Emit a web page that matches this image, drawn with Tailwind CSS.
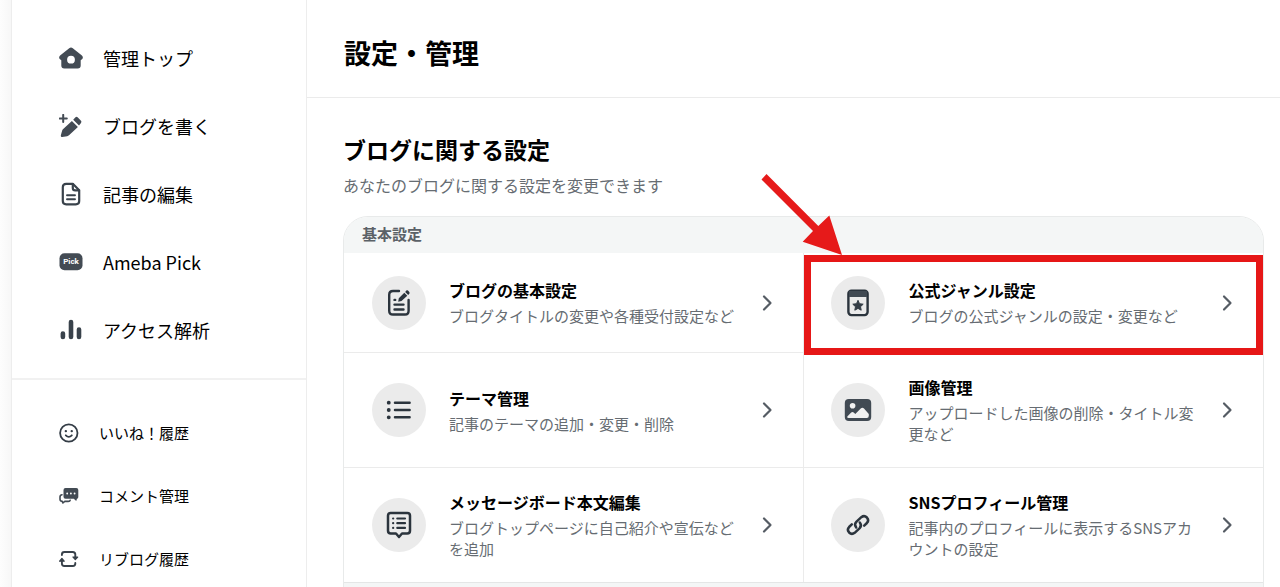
<!DOCTYPE html>
<html lang="ja">
<head>
<meta charset="utf-8">
<meta name="viewport" content="width=device-width, initial-scale=1">
<title>設定・管理</title>
<script src="https://cdn.jsdelivr.net/npm/@tailwindcss/browser@4"></script>
</head>
<body class="h-screen overflow-hidden bg-white font-['Noto_Sans_CJK_JP',sans-serif] text-black">
<div class="flex min-h-full">
  <div class="w-[11px] shrink-0 bg-linear-to-r from-[#fdfdfd] to-[#f7f7f7]"></div>
  <aside class="w-[296px] shrink-0 border-x border-[#ededed]">
    <nav aria-label="メインメニュー" class="pt-6">
      <ul class="border-b-2 border-[#f1f1f1] pb-[14px] text-[18px] leading-7">
        <li><a href="#" class="flex h-17 items-center gap-5 pl-[47px]">
          <svg class="size-6 shrink-0" viewBox="0 0 24 24" fill="#434b54"><path fill-rule="evenodd" d="M10.200 2.200Q12 .8 13.800 2.200L22.900 9.600Q24.600 11.400 23.300 13L21.700 14.300V19.500Q21.700 22.500 18.700 22.500H5.300Q2.300 22.500 2.300 19.500V14.300L.7 13Q-.6 11.400 1.100 9.600ZM12 9.800a3.900 3.900 0 1 0 0 7.800 3.900 3.900 0 0 0 0-7.800Z"/></svg>
          <span>管理トップ</span></a></li>
        <li><a href="#" class="flex h-17 items-center gap-5 pl-[47px]">
          <svg class="size-6 shrink-0" viewBox="0 0 24 24"><path d="M4.200 .9V8.100M.7 4.500H7.800" stroke="#434b54" stroke-width="2" stroke-linecap="round"/><path fill="#434b54" d="M12.900 7 18.900 13 10 21.300Q9.200 22 8.200 22.200L3.200 23Q1.600 23.100 1.800 21.500L3.100 16.800Q3.400 15.900 4.200 15.100ZM14.200 5.800 16.500 3.200Q17.500 2.200 18.600 3.200L22 6.800Q22.900 7.900 22 8.900L20 11.600Z"/></svg>
          <span>ブログを書く</span></a></li>
        <li><a href="#" class="flex h-17 items-center gap-5 pl-[47px]">
          <svg class="size-6 shrink-0" viewBox="0 0 24 24" fill="none" stroke="#39424b" stroke-width="2.200" stroke-linecap="round" stroke-linejoin="round"><path d="M13.800 1.800H7.200Q3.800 1.800 3.800 5.200V19Q3.800 22.300 7.200 22.300H16.800Q20.200 22.300 20.200 19V8.200Z"/><path d="M13.800 2V6Q13.800 8.400 16.200 8.400H20"/><path d="M8 13.300H16M8 17.300H16" stroke-width="1.900"/></svg>
          <span>記事の編集</span></a></li>
        <li><a href="#" class="flex h-17 items-center gap-5 pl-[47px]">
          <svg class="size-6 shrink-0" viewBox="0 0 24 24"><rect x=".5" y="3.200" width="23" height="17" rx="5" fill="#434b54"/><text x="12" y="14.300" text-anchor="middle" font-family="Roboto" font-size="8" font-weight="700" fill="#fff">Pick</text></svg>
          <span>Ameba Pick</span></a></li>
        <li><a href="#" class="flex h-17 items-center gap-5 pl-[47px]">
          <svg class="size-6 shrink-0" viewBox="0 0 24 24" stroke="#39424b" stroke-width="4.600" stroke-linecap="round"><path d="M3.900 15.500V19M12 4V19M20 11.500V19"/></svg>
          <span>アクセス解析</span></a></li>
      </ul>
      <ul class="pt-[22px] text-[15px] leading-6">
        <li><a href="#" class="flex h-[62px] items-center gap-5 pl-[47px]">
          <svg class="size-5 shrink-0" viewBox="0 0 20 20" fill="none" stroke="#343d46" stroke-width="1.800" stroke-linecap="round"><circle cx="9.800" cy="10" r="8.700"/><path d="M6.800 12.300Q9.800 15.300 12.800 12.300"/><path d="M6.800 8.200H6.900M12.700 8.200H12.800" stroke-width="2.300"/></svg>
          <span>いいね！履歴</span></a></li>
        <li><a href="#" class="flex h-[63px] items-center gap-5 pl-[47px]">
          <svg class="size-5 shrink-0" viewBox="0 0 20 20"><path fill="#434b54" d="M6.500 2H17.300Q19.300 2 19.300 4V11Q19.300 12.600 18 12.800L17.200 15 14.800 12.800H6.500Q4.500 12.800 4.500 10.800V4Q4.500 2 6.500 2Z"/><path d="M8.200 7.500H16" stroke="#fff" stroke-width="1.900" stroke-linecap="round" stroke-dasharray="0 3.700"/><path d="M3 8.800Q1 9 1 11V13.300Q1 15.300 3.300 15.400L3.900 17 5.800 15.400H9.200Q11 15.400 11.200 14.200" fill="none" stroke="#434b54" stroke-width="1.600" stroke-linecap="round" stroke-linejoin="round"/></svg>
          <span>コメント管理</span></a></li>
        <li><a href="#" class="flex h-[63px] items-center gap-5 pl-[47px]">
          <svg class="size-5 shrink-0" viewBox="0 0 20 20" fill="none" stroke="#39424b" stroke-width="1.900" stroke-linecap="round" stroke-linejoin="round"><path d="M2.900 6V5.500Q2.900 3 5.400 3H13.700Q16.300 3 16.300 5.600V9M16.300 14V14.500Q16.300 17 13.800 17H5.400Q2.900 17 2.900 14.500V10.800"/><path fill="#39424b" stroke-width="1.200" d="M14 8H18.700L16.300 10.600ZM.6 12.200H5.200L2.900 9.500Z"/></svg>
          <span>リブログ履歴</span></a></li>
      </ul>
    </nav>
  </aside>

  <main class="min-w-0 flex-1">
    <header class="border-b border-[#ebebeb] px-9 pt-8 pb-6">
      <h1 class="pl-px text-[27px] leading-[41px] font-bold">設定・管理</h1>
    </header>
    <div class="pt-[33px] pr-4 pl-9">
      <h2 class="text-[23px] leading-9 font-bold">ブログに関する設定</h2>
      <p class="mt-1 text-[16px] leading-7 text-[#666c72]">あなたのブログに関する設定を変更できます</p>

      <section class="mt-[17px] rounded-t-[25px] border border-[#e8eaea]">
        <h3 class="rounded-t-[24px] bg-[#f4f6f6] pt-[5px] pb-[7px] pl-[18px] text-[15px] leading-6 font-bold text-[#5b6167]">基本設定</h3>
        <div class="grid grid-cols-2">
          <a href="#" class="flex items-center border-r border-b border-[#ebebeb] py-[22px] pr-6 pl-7">
            <span class="mr-[23px] flex h-[55px] shrink-0 items-center"><span class="flex size-[54px] items-center justify-center rounded-full bg-[#ebebeb]">
              <svg class="size-7" viewBox="0 0 28 28" fill="none" stroke="#2b343d" stroke-width="2.400" stroke-linecap="round"><path d="M14 2H8Q4.200 2 4.200 5.800V21.700Q4.200 25.500 8 25.500H20Q23.600 25.500 23.600 21.700V11"/><path d="M9.500 15.600H18.500M9.500 20.500H18.500"/><path d="M9.500 10.900H10.200"/><path stroke="none" fill="#2b343d" d="M19.300 3.800 22.300 6.800 16.500 12.100 13.200 12.800 13.800 9.300ZM20.200 2.900 21.300 1.600Q22.200 .9 23 1.600L24.300 2.900Q25 3.800 24.300 4.700L23.200 5.900Z"/></svg>
            </span></span>
            <span class="flex-1"><strong class="block text-[16px] leading-[22px]">ブログの基本設定</strong><span class="mt-1 block text-[15px] leading-[21px] text-[#666c72]">ブログタイトルの変更や各種受付設定など</span></span>
            <svg class="ml-3 size-6 shrink-0" viewBox="0 0 24 24" fill="none" stroke="#555c64" stroke-width="2.200" stroke-linecap="round" stroke-linejoin="round"><path d="M9 5.500 15.500 12 9 18.500"/></svg>
          </a>
          <a href="#" class="relative flex items-center border-b border-[#ebebeb] py-[22px] pr-6 pl-[27px]">
            <span class="mr-6 flex h-[55px] shrink-0 items-center"><span class="flex size-[54px] items-center justify-center rounded-full bg-[#ebebeb]">
              <svg class="size-7" viewBox="0 0 28 28"><rect x="4.400" y="1.700" width="19.200" height="24.400" rx="3" fill="#ebebeb" stroke="#2b343d" stroke-width="2.400"/><path fill="#414a53" d="M5 2H23V8H5Z"/><path fill="#343d46" stroke="#343d46" stroke-linejoin="round" d="M14 11.300 15.500 14.700 19.200 15.200 16.500 17.700 17.200 21.200 14 19.400 10.800 21.200 11.500 17.700 8.800 15.200 12.500 14.700Z"/></svg>
            </span></span>
            <span class="flex-1"><strong class="block text-[16px] leading-[22px]">公式ジャンル設定</strong><span class="mt-1 block text-[15px] leading-[21px] text-[#666c72]">ブログの公式ジャンルの設定・変更など</span></span>
            <svg class="ml-3 size-6 shrink-0" viewBox="0 0 24 24" fill="none" stroke="#555c64" stroke-width="2.200" stroke-linecap="round" stroke-linejoin="round"><path d="M9 5.500 15.500 12 9 18.500"/></svg>
            <span class="absolute inset-x-0 top-0.5 -bottom-[3px] border-[7px] border-[#e61717]"></span>
            <svg class="absolute -top-[81px] -left-11 size-[84px]" viewBox="0 0 84 84" fill="#e61a1a"><path d="M6.500 2 58.300 54 69.300 43.500 82 83 42.700 69.700 53 59 1.500 7.500Z"/></svg>
          </a>
          <a href="#" class="flex items-center border-r border-b border-[#ebebeb] py-[23px] pr-6 pl-7">
            <span class="mr-[23px] flex size-[54px] shrink-0 items-center justify-center rounded-full bg-[#ebebeb]">
              <svg class="size-7" viewBox="0 0 28 28" fill="none" stroke="#2b343d" stroke-width="2.500" stroke-linecap="round"><path d="M10 6.700H24.600M10 14H24.600M10 21.300H24.600"/><path stroke-width="3.800" d="M3.700 6.700H3.800M3.700 14H3.800M3.700 21.300H3.800"/></svg>
            </span>
            <span class="flex-1"><strong class="block text-[16px] leading-[22px]">テーマ管理</strong><span class="mt-1 block text-[15px] leading-[21px] text-[#666c72]">記事のテーマの追加・変更・削除</span></span>
            <svg class="ml-3 size-6 shrink-0" viewBox="0 0 24 24" fill="none" stroke="#555c64" stroke-width="2.200" stroke-linecap="round" stroke-linejoin="round"><path d="M9 5.500 15.500 12 9 18.500"/></svg>
          </a>
          <a href="#" class="flex items-center border-b border-[#ebebeb] py-[23px] pr-6 pl-[27px]">
            <span class="mr-6 flex size-[54px] shrink-0 items-center justify-center rounded-full bg-[#ebebeb]">
              <svg class="size-7" viewBox="0 0 28 28"><rect x=".8" y="3" width="26.400" height="22" rx="4" fill="#414a53"/><circle cx="8.600" cy="9.800" r="2.800" fill="#f1f1f1"/><path fill="#f1f1f1" d="M3.300 20.500 7.200 16.500Q8.400 15.500 9.700 16.500L11.300 18 16.700 12.500Q18.400 11.100 20 12.500L24.800 18V19.800Q24.800 22 22.800 22H4.800Q2.700 22 3.300 20.500Z"/></svg>
            </span>
            <span class="flex-1"><strong class="block text-[16px] leading-[22px]">画像管理</strong><span class="mt-1 block text-[15px] leading-[21px] text-[#666c72]">アップロードした画像の削除・タイトル変更など</span></span>
            <svg class="ml-3 size-6 shrink-0" viewBox="0 0 24 24" fill="none" stroke="#555c64" stroke-width="2.200" stroke-linecap="round" stroke-linejoin="round"><path d="M9 5.500 15.500 12 9 18.500"/></svg>
          </a>
          <a href="#" class="flex items-center border-r border-[#ebebeb] py-[23px] pr-6 pl-7">
            <span class="mr-[23px] flex size-[54px] shrink-0 items-center justify-center rounded-full bg-[#ebebeb]">
              <svg class="size-7" viewBox="0 0 28 28" fill="none" stroke="#2b343d" stroke-linecap="round" stroke-linejoin="round"><path stroke-width="2.500" d="M5.700 2H22.300Q25 2 25 4.700V19.800Q25 22.500 22.300 22.500H17L14 26 11 22.500H5.700Q3 22.500 3 19.800V4.700Q3 2 5.700 2Z"/><path stroke-width="2.200" d="M12.300 7.500H20M12.300 12.200H20M12.300 16.900H20M8.100 7.500H8.200M8.100 12.200H8.200M8.100 16.900H8.200"/></svg>
            </span>
            <span class="flex-1"><strong class="block text-[16px] leading-[22px]">メッセージボード本文編集</strong><span class="mt-1 block text-[15px] leading-[21px] text-[#666c72]">ブログトップページに自己紹介や宣伝などを追加</span></span>
            <svg class="ml-3 size-6 shrink-0" viewBox="0 0 24 24" fill="none" stroke="#555c64" stroke-width="2.200" stroke-linecap="round" stroke-linejoin="round"><path d="M9 5.500 15.500 12 9 18.500"/></svg>
          </a>
          <a href="#" class="flex items-center py-[23px] pr-6 pl-[27px]">
            <span class="mr-6 flex size-[54px] shrink-0 items-center justify-center rounded-full bg-[#ebebeb]">
              <svg class="size-7" viewBox="0 0 28 28" fill="none" stroke="#2b343d" stroke-width="2.500" stroke-linecap="round"><path d="M12.200 16.400Q9.800 13.300 12.300 10.800L17.300 6.200Q20.300 3.900 22.900 6.500 25.400 9.300 22.900 12L20.200 14.600"/><path d="M15.800 11.600Q18.200 14.700 15.700 17.200L10.700 21.800Q7.700 24.100 5.100 21.500 2.600 18.700 5.100 16L7.800 13.400"/></svg>
            </span>
            <span class="flex-1"><strong class="block text-[16px] leading-[22px]">SNSプロフィール管理</strong><span class="mt-1 block text-[15px] leading-[21px] text-[#666c72]">記事内のプロフィールに表示するSNSアカウントの設定</span></span>
            <svg class="ml-3 size-6 shrink-0" viewBox="0 0 24 24" fill="none" stroke="#555c64" stroke-width="2.200" stroke-linecap="round" stroke-linejoin="round"><path d="M9 5.500 15.500 12 9 18.500"/></svg>
          </a>
        </div>
        <div class="h-9 border-t border-[#e4e6e6] bg-[#f4f6f6]"></div>
      </section>
    </div>
  </main>
</div>
</body>
</html>
